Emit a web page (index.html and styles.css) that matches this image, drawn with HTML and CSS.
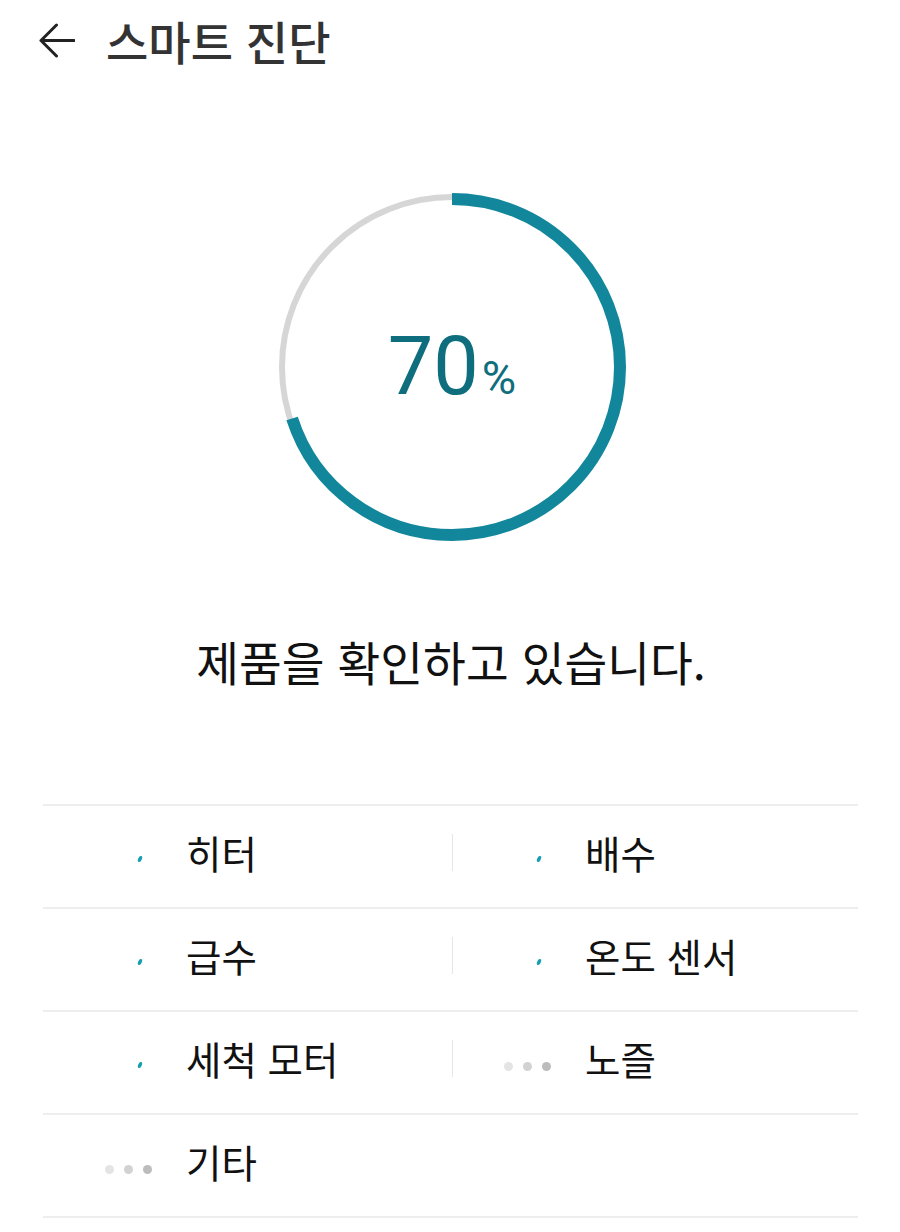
FILE: index.html
```html
<!DOCTYPE html>
<html lang="ko">
<head>
<meta charset="utf-8">
<title>스마트 진단</title>
<link rel="stylesheet" href="styles.css">
</head>
<body>
<header class="topbar">
  <svg class="back" width="36" height="36" viewBox="0 0 36 36" aria-hidden="true">
    <path d="M35 17.5 H2 M17.5 2 L2 17.5 L17.5 33" fill="none" stroke="#222" stroke-width="3" stroke-linecap="round" stroke-linejoin="round"/>
  </svg>
  <h1 class="title">스마트 진단</h1>
</header>

<section class="gauge">
  <svg class="ring" width="360" height="360" viewBox="0 0 360 360" aria-hidden="true">
    <circle cx="180" cy="180" r="170" fill="none" stroke="#d6d6d6" stroke-width="6"/>
    <circle cx="180" cy="180" r="168" fill="none" stroke="#12879b" stroke-width="12"
      stroke-dasharray="739.0 1055.6" transform="rotate(-90 180 180)"/>
  </svg>
  <div class="value"><span class="num">70</span><span class="pct">%</span></div>
</section>

<p class="status">제품을 확인하고 있습니다.</p>

<div class="list">
  <div class="row">
    <div class="cell">
      <span class="ico"><svg width="24" height="24" viewBox="0 0 24 24"><ellipse cx="12" cy="12" rx="1.8" ry="3.2" transform="rotate(25 12 12)" fill="#169fb2"/></svg></span>
      <span class="label">히터</span>
    </div>
    <div class="cell right">
      <span class="divider"></span>
      <span class="ico"><svg width="24" height="24" viewBox="0 0 24 24"><ellipse cx="12" cy="12" rx="1.8" ry="3.2" transform="rotate(25 12 12)" fill="#169fb2"/></svg></span>
      <span class="label">배수</span>
    </div>
  </div>
  <div class="row">
    <div class="cell">
      <span class="ico"><svg width="24" height="24" viewBox="0 0 24 24"><ellipse cx="12" cy="12" rx="1.8" ry="3.2" transform="rotate(25 12 12)" fill="#169fb2"/></svg></span>
      <span class="label">급수</span>
    </div>
    <div class="cell right">
      <span class="divider"></span>
      <span class="ico"><svg width="24" height="24" viewBox="0 0 24 24"><ellipse cx="12" cy="12" rx="1.8" ry="3.2" transform="rotate(25 12 12)" fill="#169fb2"/></svg></span>
      <span class="label">온도 센서</span>
    </div>
  </div>
  <div class="row">
    <div class="cell">
      <span class="ico"><svg width="24" height="24" viewBox="0 0 24 24"><ellipse cx="12" cy="12" rx="1.8" ry="3.2" transform="rotate(25 12 12)" fill="#169fb2"/></svg></span>
      <span class="label">세척 모터</span>
    </div>
    <div class="cell right">
      <span class="divider"></span>
      <span class="ico"><span class="dots"><i class="d1"></i><i class="d2"></i><i class="d3"></i></span></span>
      <span class="label">노즐</span>
    </div>
  </div>
  <div class="row">
    <div class="cell">
      <span class="ico"><span class="dots"><i class="d1"></i><i class="d2"></i><i class="d3"></i></span></span>
      <span class="label">기타</span>
    </div>
    <div class="cell right"></div>
  </div>
</div>
</body>
</html>
```
FILE: styles.css
```css
* { box-sizing: border-box; }
html, body { margin: 0; padding: 0; background: #fff; }
body {
  width: 900px;
  font-family: "Noto Sans CJK KR", "Noto Sans", sans-serif;
  color: #111;
}
.topbar {
  height: 80px;
  display: flex;
  align-items: center;
  padding-left: 39px;
}
.back { display: block; margin-top: 2px; }
.title {
  margin: 0 0 0 31px;
  font-size: 46px;
  font-weight: 500;
  color: #333;
  line-height: 1;
}
.gauge {
  margin: 107px auto 0;
  width: 360px;
  height: 360px;
  display: grid;
  place-items: center;
  transform: translateX(2px);
}
.ring, .value { grid-area: 1 / 1; }
.ring { display: block; }
.value {
  font-family: Roboto, "Noto Sans", sans-serif;
  color: #0f6e7d;
  display: flex;
  align-items: baseline;
  margin-top: -2px;
}
.num { font-size: 81px; line-height: 1; }
.pct { font-size: 47px; line-height: 1; margin-left: 3px; }
.status {
  margin: 86px 0 0;
  text-align: center;
  font-size: 46.5px;
  line-height: 55px;
  color: #111;
  padding-left: 2px;
}
.list {
  margin: 116px 42px 0 43px;
  border-top: 2px solid #eeeeee;
}
.row {
  height: 103px;
  border-bottom: 2px solid #eeeeee;
  display: grid;
  grid-template-columns: 409px 1fr;
}
.cell {
  display: flex;
  align-items: center;
  padding-left: 45px;
}
.cell.right { padding-left: 0; }
.divider {
  width: 1px;
  height: 37px;
  background: #e6e6e6;
  margin: -8px 34px 0 0;
}
.ico {
  width: 64px;
  display: flex;
  justify-content: flex-end;
  align-items: center;
  margin-top: 4px;
}
.ico svg { display: block; }
.dots { display: flex; gap: 10px; margin-top: 4px; }
.dots i { display: block; width: 9px; height: 9px; border-radius: 50%; }
.d1 { background: #e4e4e4; }
.d2 { background: #d2d2d2; }
.d3 { background: #bcbcbc; }
.label {
  margin-left: 34px;
  font-size: 38.5px;
  line-height: 1;
  color: #111;
  margin-top: -8px;
}
```
